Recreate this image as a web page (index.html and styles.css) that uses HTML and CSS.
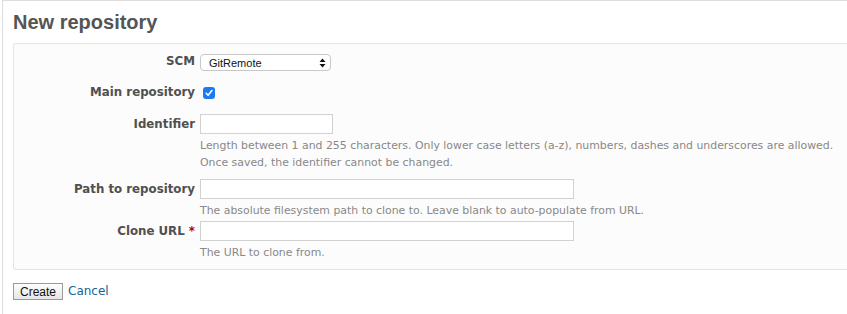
FILE: index.html
```html
<!DOCTYPE html>
<html>
<head>
<meta charset="utf-8">
<link rel="stylesheet" href="styles.css">
</head>
<body>
<div class="content">
  <h2 class="title">New repository</h2>
  <form class="box tabular">
    <div class="row row-scm">
      <label class="lbl">SCM</label>
      <div class="field">
        <span class="select">
          <span class="select-text">GitRemote</span>
          <svg class="select-arrows" width="7" height="10" viewBox="0 0 7 10"><path d="M3.5 0.5 L6.5 4 H0.5 Z M3.5 9.5 L6.5 6 H0.5 Z" fill="#111"/></svg>
        </span>
      </div>
    </div>
    <div class="row row-main">
      <label class="lbl">Main repository</label>
      <div class="field">
        <span class="checkbox"><svg width="12" height="12" viewBox="0 0 12 12"><path d="M3.2 6.3 L5.1 8.3 L8.9 3.6" fill="none" stroke="#fff" stroke-width="1.6" stroke-linecap="round" stroke-linejoin="round"/></svg></span>
      </div>
    </div>
    <div class="row row-ident">
      <label class="lbl">Identifier</label>
      <div class="field">
        <span class="input input-short"></span>
        <em class="info">Length between 1 and 255 characters. Only lower case letters (a-z), numbers, dashes and underscores are allowed.<br>Once saved, the identifier cannot be changed.</em>
      </div>
    </div>
    <div class="row row-path">
      <label class="lbl">Path to repository</label>
      <div class="field">
        <span class="input input-long"></span>
        <em class="info">The absolute filesystem path to clone to. Leave blank to auto-populate from URL.</em>
      </div>
    </div>
    <div class="row row-url">
      <label class="lbl">Clone URL <span class="required">*</span></label>
      <div class="field">
        <span class="input input-long"></span>
        <em class="info">The URL to clone from.</em>
      </div>
    </div>
  </form>
  <div class="actions">
    <span class="button">Create</span>
    <a class="link" href="#">Cancel</a>
  </div>
</div>
</body>
</html>
```
FILE: styles.css
```css
html, body {
  margin: 0;
  padding: 0;
  background: #fff;
}
body {
  font-family: "DejaVu Sans", Verdana, sans-serif;
  font-size: 12px;
  color: #333;
}
.content {
  margin-left: 2px;
  border-left: 1px solid #ddd;
  border-top: 1px solid #ddd;
  padding: 0 0 20px 10px;
  min-height: 300px;
}
.title {
  margin: 0;
  padding: 9px 0 0 0;
  height: 42px;
  box-sizing: border-box;
  font-family: "Liberation Sans", Arial, sans-serif;
  font-weight: bold;
  font-size: 20px;
  line-height: 24px;
  color: #555;
}
.box {
  margin: 0;
  border: 1px solid #e4e4e4;
  border-right: none;
  border-radius: 3px 0 0 3px;
  background: #fcfcfc;
  padding: 9px 6px 8px 6px;
  display: flex;
  flex-direction: column;
}
.row {
  display: grid;
  grid-template-columns: 175px 1fr;
  column-gap: 5px;
  align-items: start;
}
.lbl {
  text-align: right;
  font-weight: bold;
  font-size: 11.8px;
  color: #505050;
  line-height: 16px;
  padding-top: 2px;
  white-space: nowrap;
}
.required { color: #bb0000; }
.field {
  display: flex;
  flex-direction: column;
  align-items: flex-start;
}
.row-scm .field { padding-top: 1px; padding-bottom: 13px; }
.row-scm .lbl { padding-top: 0; }
.row-main { height: 30px; }
.row-main .lbl { padding-top: 0; }
.row-main .field { padding-top: 3px; }
.select {
  width: 131px;
  height: 17px;
  box-sizing: border-box;
  border: 1px solid #c8c8c8;
  border-radius: 4px;
  background: #fff;
  display: flex;
  align-items: center;
  justify-content: space-between;
  padding: 0 4px 0 8px;
  font-family: "Liberation Sans", Arial, sans-serif;
  font-size: 11px;
  color: #111;
}
.checkbox {
  margin-left: 3px;
  width: 12px;
  height: 12px;
  border-radius: 3px;
  background: #1a7cf2;
  display: inline-flex;
}
.input {
  display: block;
  height: 20px;
  box-sizing: border-box;
  border: 1px solid #d2d2d2;
  background: #fff;
}
.input-short { width: 133px; }
.input-long { width: 374px; }
.info {
  font-style: normal;
  font-size: 10.9px;
  color: #888;
  line-height: 17px;
  padding-top: 3px;
  white-space: nowrap;
}
.row-ident .info { padding-bottom: 8px; }
.row-path .info { padding-bottom: 2px; }
.actions {
  display: flex;
  align-items: flex-start;
  gap: 5px;
  margin-top: 13px;
}
.button {
  width: 50px;
  height: 17px;
  box-sizing: border-box;
  border: 1px solid #999;
  background: linear-gradient(#fdfdfd, #e6e6e6);
  font-family: "Liberation Sans", Arial, sans-serif;
  font-size: 12px;
  color: #111;
  display: flex;
  align-items: center;
  justify-content: center;
}
.link {
  color: #169;
  text-decoration: none;
  font-size: 12px;
  line-height: 14px;
  margin-top: 1px;
}
```
